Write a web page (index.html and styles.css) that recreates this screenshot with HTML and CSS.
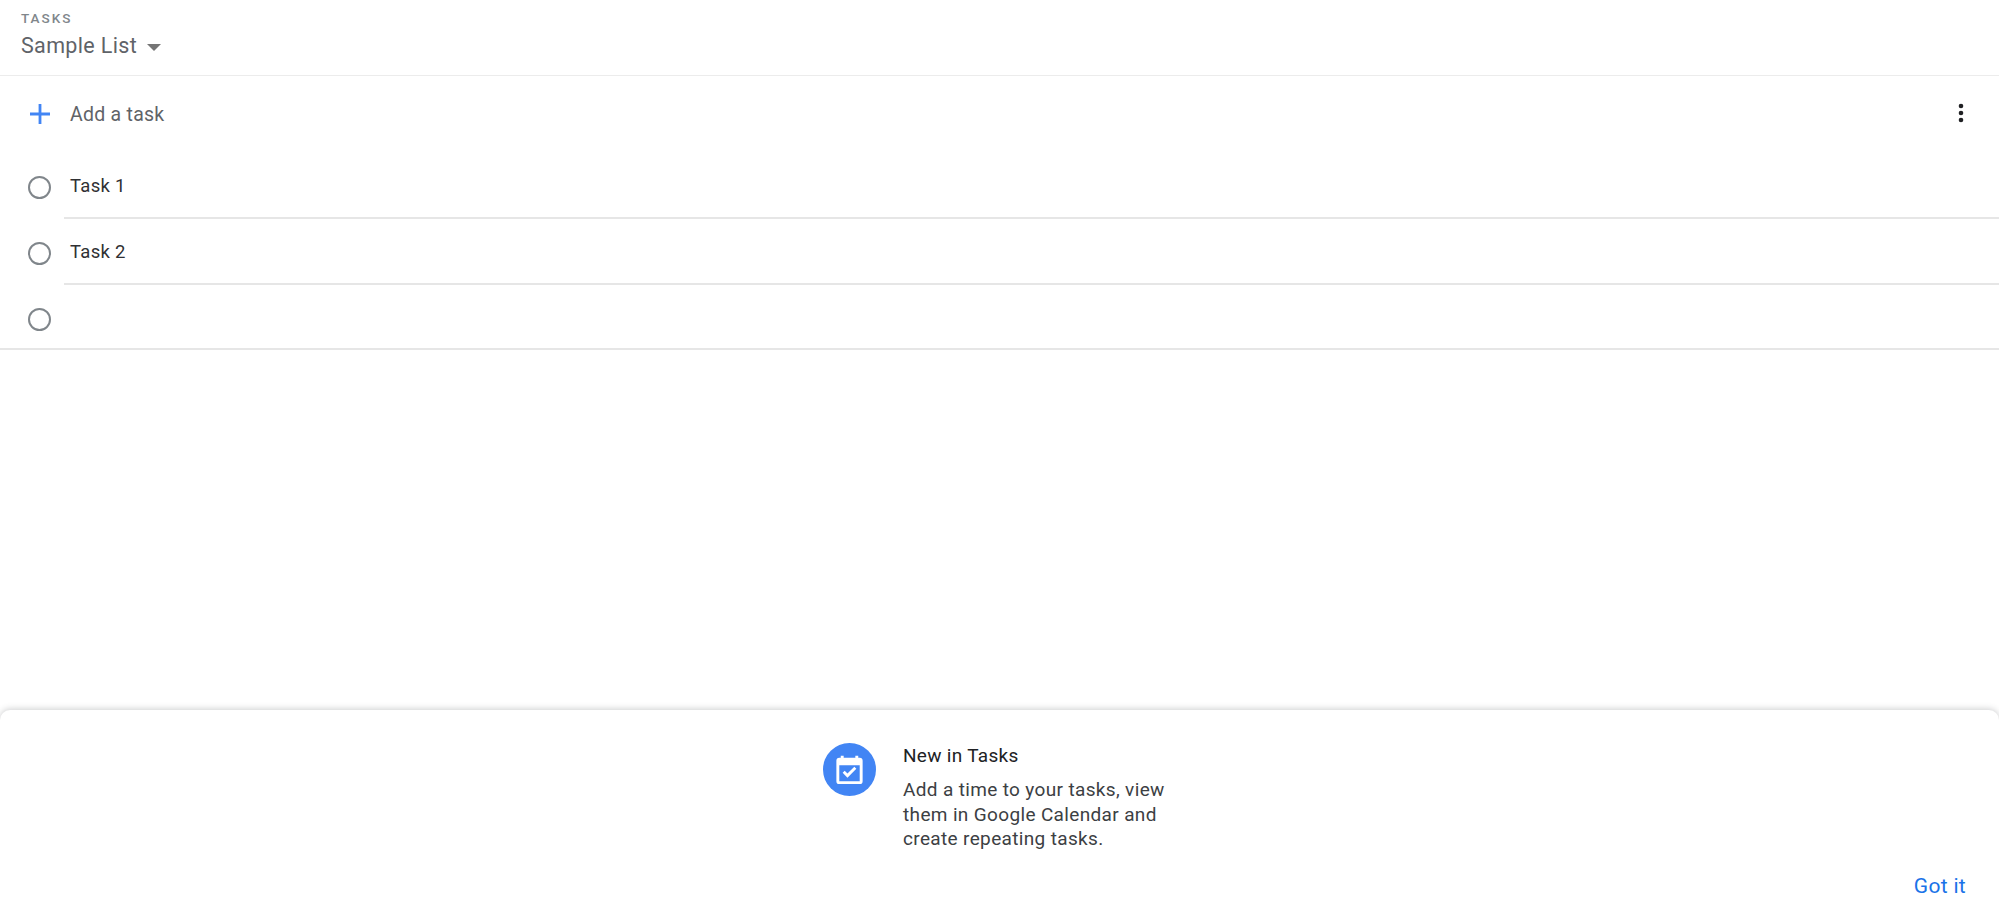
FILE: index.html
```html
<!DOCTYPE html>
<html lang="en">
<head>
<meta charset="utf-8">
<title>Tasks</title>
<link rel="stylesheet" href="styles.css">
</head>
<body>
<div class="app">
  <header class="header">
    <div class="eyebrow">TASKS</div>
    <div class="list-select"><span>Sample List</span><svg class="caret" width="14" height="7" viewBox="0 0 14 7"><path d="M0 0h14L7 7z"/></svg></div>
  </header>
  <div class="add-row">
    <svg class="plus" width="20" height="20" viewBox="0 0 20 20"><path d="M8.6 0h2.8v8.6H20v2.8h-8.6V20H8.600V11.400H0V8.600h8.600z"/></svg>
    <span class="add-label">Add a task</span>
    <svg class="more" width="6" height="20" viewBox="0 0 6 20"><circle cx="3" cy="3" r="2.3"/><circle cx="3" cy="10" r="2.3"/><circle cx="3" cy="17" r="2.3"/></svg>
  </div>
  <ul class="tasks">
    <li class="task"><span class="radio"></span><span class="task-text">Task 1</span></li>
    <li class="task"><span class="radio"></span><span class="task-text">Task 2</span></li>
    <li class="task task-last"><span class="radio"></span><span class="task-text"></span></li>
  </ul>
  <section class="promo">
    <div class="promo-body">
      <div class="promo-icon">
        <svg width="35" height="35" viewBox="0 0 24 24"><path fill="#fff" d="M19 4h-1V2.500h-2V4H8V2.500H6V4H5a2 2 0 0 0-2 2v14a2 2 0 0 0 2 2h14a2 2 0 0 0 2-2V6a2 2 0 0 0-2-2zm0 16H5V9h14z"/><path fill="#fff" d="M10.600 17.600l-3.300-3.300 1.400-1.400 1.900 1.900 4.700-4.700 1.400 1.400z"/></svg>
      </div>
      <div class="promo-text">
        <h2 class="promo-title">New in Tasks</h2>
        <p class="promo-desc">Add a time to your tasks, view<br>them in Google Calendar and<br>create repeating tasks.</p>
      </div>
    </div>
    <button class="got-it">Got it</button>
  </section>
</div>
</body>
</html>
```
FILE: styles.css
```css
* { box-sizing: border-box; }
html, body { margin: 0; height: 100%; background: #fff; overflow: hidden; }
body { font-family: Roboto, "Liberation Sans", sans-serif; color: #202124; }
.app { height: 914px; display: flex; flex-direction: column; }
.header { height: 76px; padding: 11px 0 0 21px; border-bottom: 1px solid #ececec; }
.eyebrow { font-size: 13.500px; line-height: 14px; letter-spacing: 2px; font-weight: 500; color: #80868b; }
.list-select { display: flex; align-items: center; gap: 10px; margin-top: 8px; font-size: 21.500px; line-height: 26px; letter-spacing: .35px; color: #5f6368; }
.caret { fill: #757575; margin-top: 2px; }
.add-row { height: 76px; display: flex; align-items: center; padding: 0 35px 0 30px; margin-bottom: 3px; }
.plus { fill: #4285f4; }
.add-label { flex: 1; margin-left: 20px; font-size: 19.500px; letter-spacing: .25px; color: #5f6368; }
.more { fill: #202124; margin-top: -2px; }
.tasks { list-style: none; margin: 0; padding: 0; }
.task { height: 65.800px; display: flex; align-items: center; padding-left: 28px; position: relative; }
.task::after { content: ""; position: absolute; left: 64px; right: 0; bottom: 2px; height: 2px; background: #e6e6e6; }
.task-last::after { left: 0; }
.radio { width: 23px; height: 23px; border: 2.500px solid #80868b; border-radius: 50%; flex: none; }
.task-text { margin-left: 19px; font-size: 18.500px; letter-spacing: .3px; margin-top: -3px; color: #2f3033; }
.promo { margin-top: auto; height: 204px; border-radius: 10px 10px 0 0; box-shadow: 0 -1px 6px rgba(60,64,67,.25); display: flex; flex-direction: column; position: relative; }
.promo-body { display: flex; padding: 33px 0 0 823px; gap: 27px; }
.promo-icon { width: 53px; height: 53px; border-radius: 50%; background: #4285f4; display: flex; align-items: center; justify-content: center; flex: none; }
.promo-text { margin-top: 1px; }
.promo-title { margin: 0; font-size: 19px; line-height: 24px; font-weight: 400; letter-spacing: .3px; color: #202124; }
.promo-desc { margin: 10px 0 0; font-size: 19px; line-height: 24.500px; letter-spacing: .35px; color: #3c4043; }
.got-it { position: absolute; right: 33px; bottom: 16px; border: 0; padding: 0; background: none; font: 400 21px Roboto, sans-serif; letter-spacing: .3px; color: #1a73e8; }
```
